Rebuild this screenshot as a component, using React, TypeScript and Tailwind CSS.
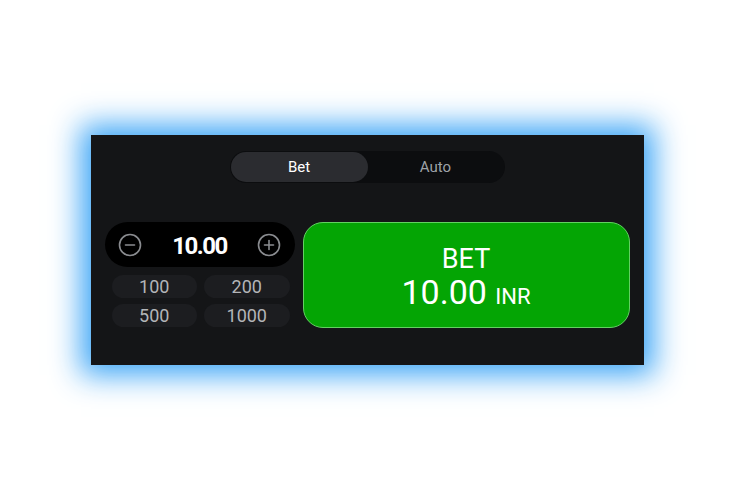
import React from "react";

const chips = ["100", "200", "500", "1000"];

function CircleIcon({ plus }: { plus?: boolean }) {
  return (
    <svg width="24" height="24" viewBox="0 0 24 24" fill="none" stroke="#8a8c90" strokeWidth="1.6">
      <circle cx="12" cy="12" r="10.5" />
      <line x1="7.5" y1="12" x2="16.5" y2="12" strokeLinecap="round" />
      {plus && <line x1="12" y1="7.5" x2="12" y2="16.5" strokeLinecap="round" />}
    </svg>
  );
}

export default function App() {
  return (
    <div className="flex h-[500px] w-full items-center justify-center bg-white font-['Roboto',sans-serif]">
      <div className="flex h-[230px] w-[553px] flex-col items-center bg-[#141517] px-[14px] pt-[16px] shadow-[0_0_28px_10px_rgba(50,160,245,0.95)]">
        <div className="flex h-[32px] w-[275px] items-center rounded-full bg-[#0c0d0f] p-[1px]">
          <button className="h-[30px] w-[137px] rounded-full bg-[#2b2c30] text-[15px] text-white">
            Bet
          </button>
          <button className="h-[30px] flex-1 rounded-full text-[15px] text-[#9ea2a7]">
            Auto
          </button>
        </div>

        <div className="mt-[39px] flex w-full gap-[8px]">
          <div className="flex w-[190px] flex-col">
            <div className="flex h-[45px] items-center justify-between rounded-full bg-black px-[13px]">
              <CircleIcon />
              <span className="pt-[2px] text-[24px] font-bold tracking-[-1.5px] text-white">10.00</span>
              <CircleIcon plus />
            </div>
            <div className="mt-[8px] grid grid-cols-2 gap-x-[7px] gap-y-[6px] pl-[7px] pr-[5px]">
              {chips.map((c) => (
                <div
                  key={c}
                  className="flex h-[23px] items-center justify-center rounded-full bg-[#1c1d20] text-[18px] text-[#b3b5b8]"
                >
                  {c}
                </div>
              ))}
            </div>
          </div>

          <button className="flex h-[106px] flex-1 flex-col items-center justify-center rounded-[20px] border border-[#62d162] bg-[#04a504] pt-[7px] text-white">
            <span className="text-[27px] leading-[31px]">BET</span>
            <span className="text-[34px] leading-[35px]">
              10.00 <span className="text-[22px]">INR</span>
            </span>
          </button>
        </div>
      </div>
    </div>
  );
}
